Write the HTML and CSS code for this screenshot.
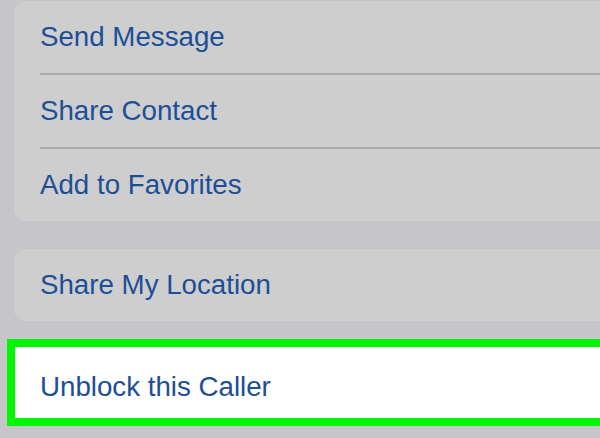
FILE: index.html
```html
<!DOCTYPE html>
<html lang="en">
<head>
    <meta charset="UTF-8">
    <meta name="viewport" content="width=device-width, initial-scale=1.0">
    <title>Contact Actions</title>
    <link rel="stylesheet" href="styles.css">
</head>
<body>
    <div class="screen">
        <div class="group first">
            <div class="row">Send Message</div>
            <div class="row">Share Contact</div>
            <div class="row">Add to Favorites</div>
        </div>
        <div class="group">
            <div class="row">Share My Location</div>
        </div>
        <div class="highlight">
            <div class="row">Unblock this Caller</div>
        </div>
    </div>
</body>
</html>
```

FILE: styles.css
```css
body {
    margin: 0;
    background-color: #c6c6ca;
    overflow: hidden;
    font-family: 'Liberation Sans', Arial, sans-serif;
}

.screen {
    width: 600px;
    height: 438px;
    overflow: hidden;
}

.group {
    margin-left: 14px;
    width: 620px;
    background-color: #cecece;
    border-radius: 12px;
    margin-bottom: 18px;
}

.group.first {
    margin-top: 1px;
    margin-bottom: 28px;
}

.row {
    height: 72px;
    display: flex;
    align-items: center;
    padding-left: 26px;
    font-size: 27.7px;
    line-height: 1;
    color: #1d4e98;
    box-sizing: border-box;
}

/* thin divider between rows, inset from the left */
.first .row + .row {
    height: 74px;
    border-top: 2px solid #ababab;
    margin-left: 26px;
    padding-left: 0;
}

.highlight {
    margin-left: 7px;
    width: 620px;
    border: 8px solid #02f602;
    background-color: #fff;
}

.highlight .row {
    height: 71px;
    padding-left: 25px;
    padding-top: 8px;
}
```
